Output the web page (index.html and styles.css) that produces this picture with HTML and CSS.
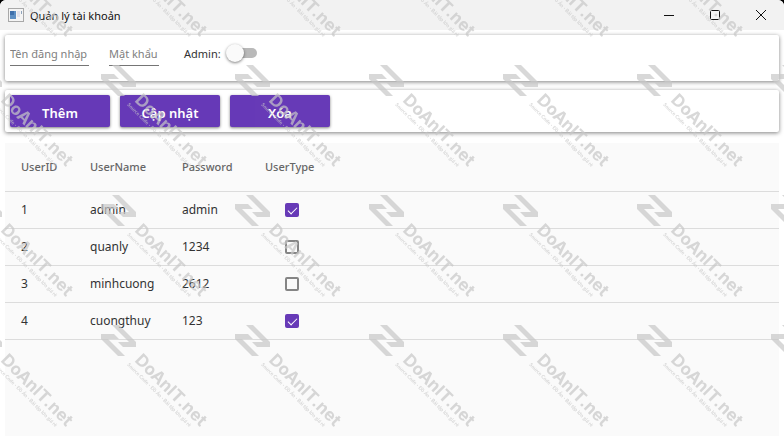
FILE: index.html
```html
<!DOCTYPE html>
<html lang="vi">
<head>
    <meta charset="utf-8">
    <title>Quản lý tài khoản</title>
    <link rel="stylesheet" href="styles.css">
</head>

<body>
    <div class="window">
        <header class="title-bar">
            <svg class="app-icon" width="16" height="14" viewBox="0 0 16 14">
                <rect x="0.5" y="0.5" width="15" height="13" fill="#f4f4f4" stroke="#a8a8a8"/>
                <rect x="2" y="3" width="6" height="8" fill="#5f8fc4"/>
                <rect x="2" y="3" width="4" height="4" fill="#3f70ab"/>
                <rect x="9" y="3" width="3" height="6" fill="#e2e2ea"/>
                <rect x="13" y="3" width="1" height="3" fill="#8fa3bb"/>
            </svg>
            <h1>Quản lý tài khoản</h1>
            <div class="window-buttons">
                <button type="button" aria-label="Minimize">
                    <svg width="10" height="10" viewBox="0 0 10 10"><path d="M0 5.5H10"/></svg>
                </button>
                <button type="button" aria-label="Maximize">
                    <svg width="10" height="10" viewBox="0 0 10 10"><rect x="0.5" y="0.5" width="9" height="9" rx="1"/></svg>
                </button>
                <button type="button" aria-label="Close">
                    <svg width="10" height="10" viewBox="0 0 10 10"><path d="M0 0L10 10M10 0L0 10"/></svg>
                </button>
            </div>
        </header>

        <main>
            <form class="card account-form">
                <input class="user-input" type="text" placeholder="Tên đăng nhập" aria-label="Tên đăng nhập">
                <input class="password-input" type="text" placeholder="Mật khẩu" aria-label="Mật khẩu">
                <label class="admin-label" for="admin">Admin:</label>
                <input class="toggle" type="checkbox" id="admin">
            </form>

            <div class="card actions">
                <button type="button">Thêm</button>
                <button type="button">Cập nhật</button>
                <button type="button">Xóa</button>
            </div>

            <div class="grid">
                <table>
                    <colgroup>
                        <col class="col-id"><col class="col-name"><col class="col-password"><col class="col-type"><col>
                    </colgroup>
                    <thead>
                        <tr><th>UserID</th><th>UserName</th><th>Password</th><th>UserType</th><td></td></tr>
                    </thead>
                    <tbody>
                        <tr><td>1</td><td>admin</td><td>admin</td><td class="type"><input type="checkbox" aria-label="admin" checked></td><td></td></tr>
                        <tr><td>2</td><td>quanly</td><td>1234</td><td class="type"><input type="checkbox" aria-label="quanly"></td><td></td></tr>
                        <tr><td>3</td><td>minhcuong</td><td>2612</td><td class="type"><input type="checkbox" aria-label="minhcuong"></td><td></td></tr>
                        <tr><td>4</td><td>cuongthuy</td><td>123</td><td class="type"><input type="checkbox" aria-label="cuongthuy" checked></td><td></td></tr>
                    </tbody>
                </table>
            </div>
        </main>

        <!-- repeated watermark -->
        <svg class="watermark" aria-hidden="true">
            <defs>
                <pattern id="mark" x="-33" y="-65" width="134" height="130" patternUnits="userSpaceOnUse">
                    <path d="M0 9H13L18 14H7L24 31H17L0 14ZM11 0H18L35 17V22H22L17 17H28Z"/>
                    <text class="mark-name" transform="translate(33 36) rotate(45)">DoAnIT.net</text>
                    <text class="mark-slogan" transform="translate(26 40) rotate(45)">Source Code - Đồ Án - Bài tập lớn giá rẻ</text>
                </pattern>
            </defs>
            <rect width="100%" height="100%" fill="url(#mark)"/>
        </svg>
    </div>
</body>
</html>
```
FILE: styles.css
```css
* {
    box-sizing: border-box;
}

body {
    margin: 0;
    background-color: #000;
    font-family: "Noto Sans", "Open Sans", sans-serif;
    font-size: 12px;
    color: #333;
}

.window {
    position: relative;
    display: flex;
    flex-direction: column;
    min-height: 100vh;
    background-color: #fff;
    border-radius: 6px 6px 0 0;
    overflow: hidden;
}

/* title bar */
.title-bar {
    display: flex;
    align-items: center;
    height: 30px;
    padding-left: 8px;
    background-color: #f2f2f2;
}

.title-bar h1 {
    flex: 1;
    margin: 0 0 0 6px;
    font-size: 11px;
    font-weight: 400;
    color: #111;
}

.window-buttons {
    display: flex;
}

.window-buttons button {
    display: flex;
    align-items: center;
    justify-content: center;
    width: 46px;
    height: 28px;
    padding: 0;
    border: none;
    background: none;
}

.window-buttons svg {
    fill: none;
    stroke: #111;
}

main {
    flex: 1;
    display: flex;
    flex-direction: column;
    padding: 5px 5px 0;
}

.card {
    display: flex;
    background-color: #fff;
    border-radius: 2px;
    box-shadow: 0 1px 4px rgba(0, 0, 0, 0.5);
}

/* account form */
.account-form {
    align-items: flex-start;
    height: 46px;
    padding: 7px 5px;
    margin-bottom: 9px;
}

.account-form input[type="text"] {
    height: 24px;
    padding: 0;
    border: none;
    border-bottom: 1px solid #757575;
    background: none;
    font-family: inherit;
    font-size: 11px;
}

.account-form ::placeholder {
    color: #808080;
}

.user-input {
    width: 79px;
    margin-right: 20px;
}

.password-input {
    width: 50px;
    margin-right: 25px;
}

.admin-label {
    margin-right: 5px;
    font-size: 11px;
    line-height: 24px;
}

.toggle {
    appearance: none;
    position: relative;
    width: 32px;
    height: 22px;
    margin: 0;
}

.toggle::before {
    content: "";
    position: absolute;
    top: 6px;
    left: 4px;
    width: 27px;
    height: 10px;
    border-radius: 5px;
    background-color: #b9b9b9;
}

.toggle::after {
    content: "";
    position: absolute;
    top: 2px;
    left: 0;
    width: 18px;
    height: 18px;
    border-radius: 50%;
    background-color: #fafafa;
    box-shadow: 0 1px 3px rgba(0, 0, 0, 0.5);
}

/* buttons */
.actions {
    gap: 10px;
    padding: 5px;
    margin-bottom: 11px;
}

.actions button {
    width: 100px;
    height: 32px;
    padding: 4px 0 0;
    border: none;
    border-radius: 2px;
    background-color: #673ab7;
    box-shadow: 0 1px 3px rgba(0, 0, 0, 0.5);
    font-family: inherit;
    font-size: 13px;
    font-weight: 600;
    color: #fff;
}

/* accounts table */
.grid {
    flex: 1;
    background-color: #fafafa;
}

table {
    width: 100%;
    table-layout: fixed;
    border-collapse: collapse;
}

.col-id {
    width: 69px;
}

.col-name {
    width: 92px;
}

.col-password {
    width: 83px;
}

.col-type {
    width: 86px;
}

th,
td {
    height: 37px;
    padding: 0 0 0 16px;
    border-bottom: 1px solid #dcdcdc;
    text-align: left;
    white-space: nowrap;
}

th {
    height: 48px;
    font-size: 11px;
    font-weight: 500;
    color: #666;
}

.type {
    padding: 0;
    text-align: center;
}

.type input {
    appearance: none;
    display: block;
    width: 14px;
    height: 14px;
    margin: 0 auto;
    border: 2px solid #858585;
    border-radius: 2px;
}

.type input:checked {
    position: relative;
    border-color: #673ab7;
    background-color: #673ab7;
}

.type input:checked::after {
    content: "";
    position: absolute;
    top: 0;
    left: 3px;
    width: 4px;
    height: 8px;
    border: solid #fff;
    border-width: 0 1px 1px 0;
    transform: rotate(45deg);
}

/* watermark */
.watermark {
    position: absolute;
    inset: 0;
    width: 100%;
    height: 100%;
    pointer-events: none;
    fill: #c8c8c8;
    opacity: 0.7;
}

.mark-name {
    font-family: Inter, sans-serif;
    font-size: 17px;
    font-weight: 700;
}

.mark-slogan {
    font-family: Lato, sans-serif;
    font-size: 5px;
    font-weight: 700;
}
```
